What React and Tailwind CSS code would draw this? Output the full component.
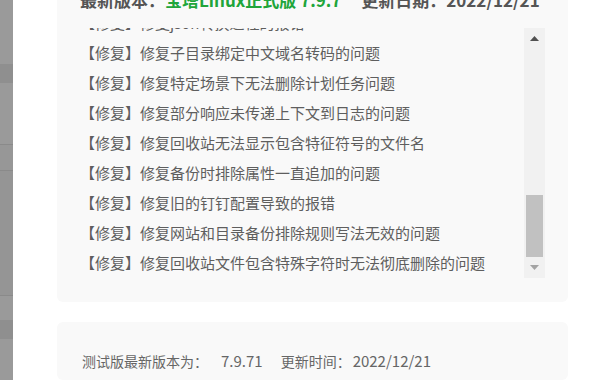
import React from "react";

const FONT = { fontFamily: '"Noto Sans CJK SC", "Noto Sans", sans-serif' };

const CHANGES = [
  "【优化】优化面板首页负载状态的显示",
  "【修复】修复json转换过程的报错",
  "【修复】修复子目录绑定中文域名转码的问题",
  "【修复】修复特定场景下无法删除计划任务问题",
  "【修复】修复部分响应未传递上下文到日志的问题",
  "【修复】修复回收站无法显示包含特征符号的文件名",
  "【修复】修复备份时排除属性一直追加的问题",
  "【修复】修复旧的钉钉配置导致的报错",
  "【修复】修复网站和目录备份排除规则写法无效的问题",
  "【修复】修复回收站文件包含特殊字符时无法彻底删除的问题",
];

const Backdrop = () => (
  <div className="flex w-[13px] shrink-0 flex-col bg-[#9a9a9a]">
    <div className="h-[64px]" />
    <div className="h-[19px] bg-[#8f8f8f]" />
    <div className="h-[61px]" />
    <div className="h-px bg-[#8a8a8a]" />
    <div className="h-[25px] bg-[#979797]" />
    <div className="h-px bg-[#8a8a8a]" />
    <div className="h-[124px] bg-[#959595]" />
    <div className="h-px bg-[#8a8a8a]" />
    <div className="h-[24px]" />
    <div className="h-[19px] bg-[#8f8f8f]" />
    <div className="flex-1" />
  </div>
);

const Scrollbar = () => (
  <div className="flex h-full w-[21px] shrink-0 flex-col bg-[#f1f1f1]">
    <div className="flex h-[21px] items-center justify-center">
      <svg width="9" height="5" viewBox="0 0 9 5">
        <path d="M4.5 0L9 5H0z" fill="#505050" />
      </svg>
    </div>
    <div className="flex-1" />
    <div className="mx-[2px] h-[62px] bg-[#c1c1c1]" />
    <div className="flex h-[21px] items-center justify-center">
      <svg width="9" height="5" viewBox="0 0 9 5">
        <path d="M0 0H9L4.5 5z" fill="#a3a3a3" />
      </svg>
    </div>
  </div>
);

const App = () => {
  return (
    <div className="flex h-[380px] w-[611px] overflow-hidden bg-white" style={FONT}>
      <Backdrop />
      <div className="flex flex-1 flex-col gap-[20px] pl-[44px] pr-[43px]">
        <div className="-mt-[20px] rounded-md bg-[#f9f9f9] px-[23px] pb-[24px] pt-[8px]">
          <div className="mb-[16px] h-[24px] whitespace-nowrap text-[17px] font-bold leading-[24px] text-[#555]">
            <span>最新版本：</span>
            <span className="text-[#20a53a]">宝塔Linux正式版 7.9.7</span>
            <span className="ml-[20px]">更新日期：2022/12/21</span>
          </div>
          <div className="flex h-[250px]">
            <div className="flex flex-1 flex-col justify-end overflow-hidden">
              {CHANGES.map((item) => (
                <div
                  key={item}
                  className="h-[30px] shrink-0 whitespace-nowrap text-[15px] leading-[30px] text-[#5e5e5e]"
                >
                  {item}
                </div>
              ))}
            </div>
            <Scrollbar />
          </div>
        </div>
        <div className="flex-1 rounded-md bg-[#f9f9f9] px-[25px] pt-[28px]">
          <div className="flex items-baseline whitespace-nowrap text-[14px] leading-[22px] text-[#666]">
            <span>测试版最新版本为：</span>
            <span className="ml-[13px] text-[15px]">7.9.71</span>
            <span className="ml-[18px]">更新时间：</span>
            <span className="ml-[2px] text-[15px]">2022/12/21</span>
          </div>
        </div>
      </div>
    </div>
  );
};

export default App;
